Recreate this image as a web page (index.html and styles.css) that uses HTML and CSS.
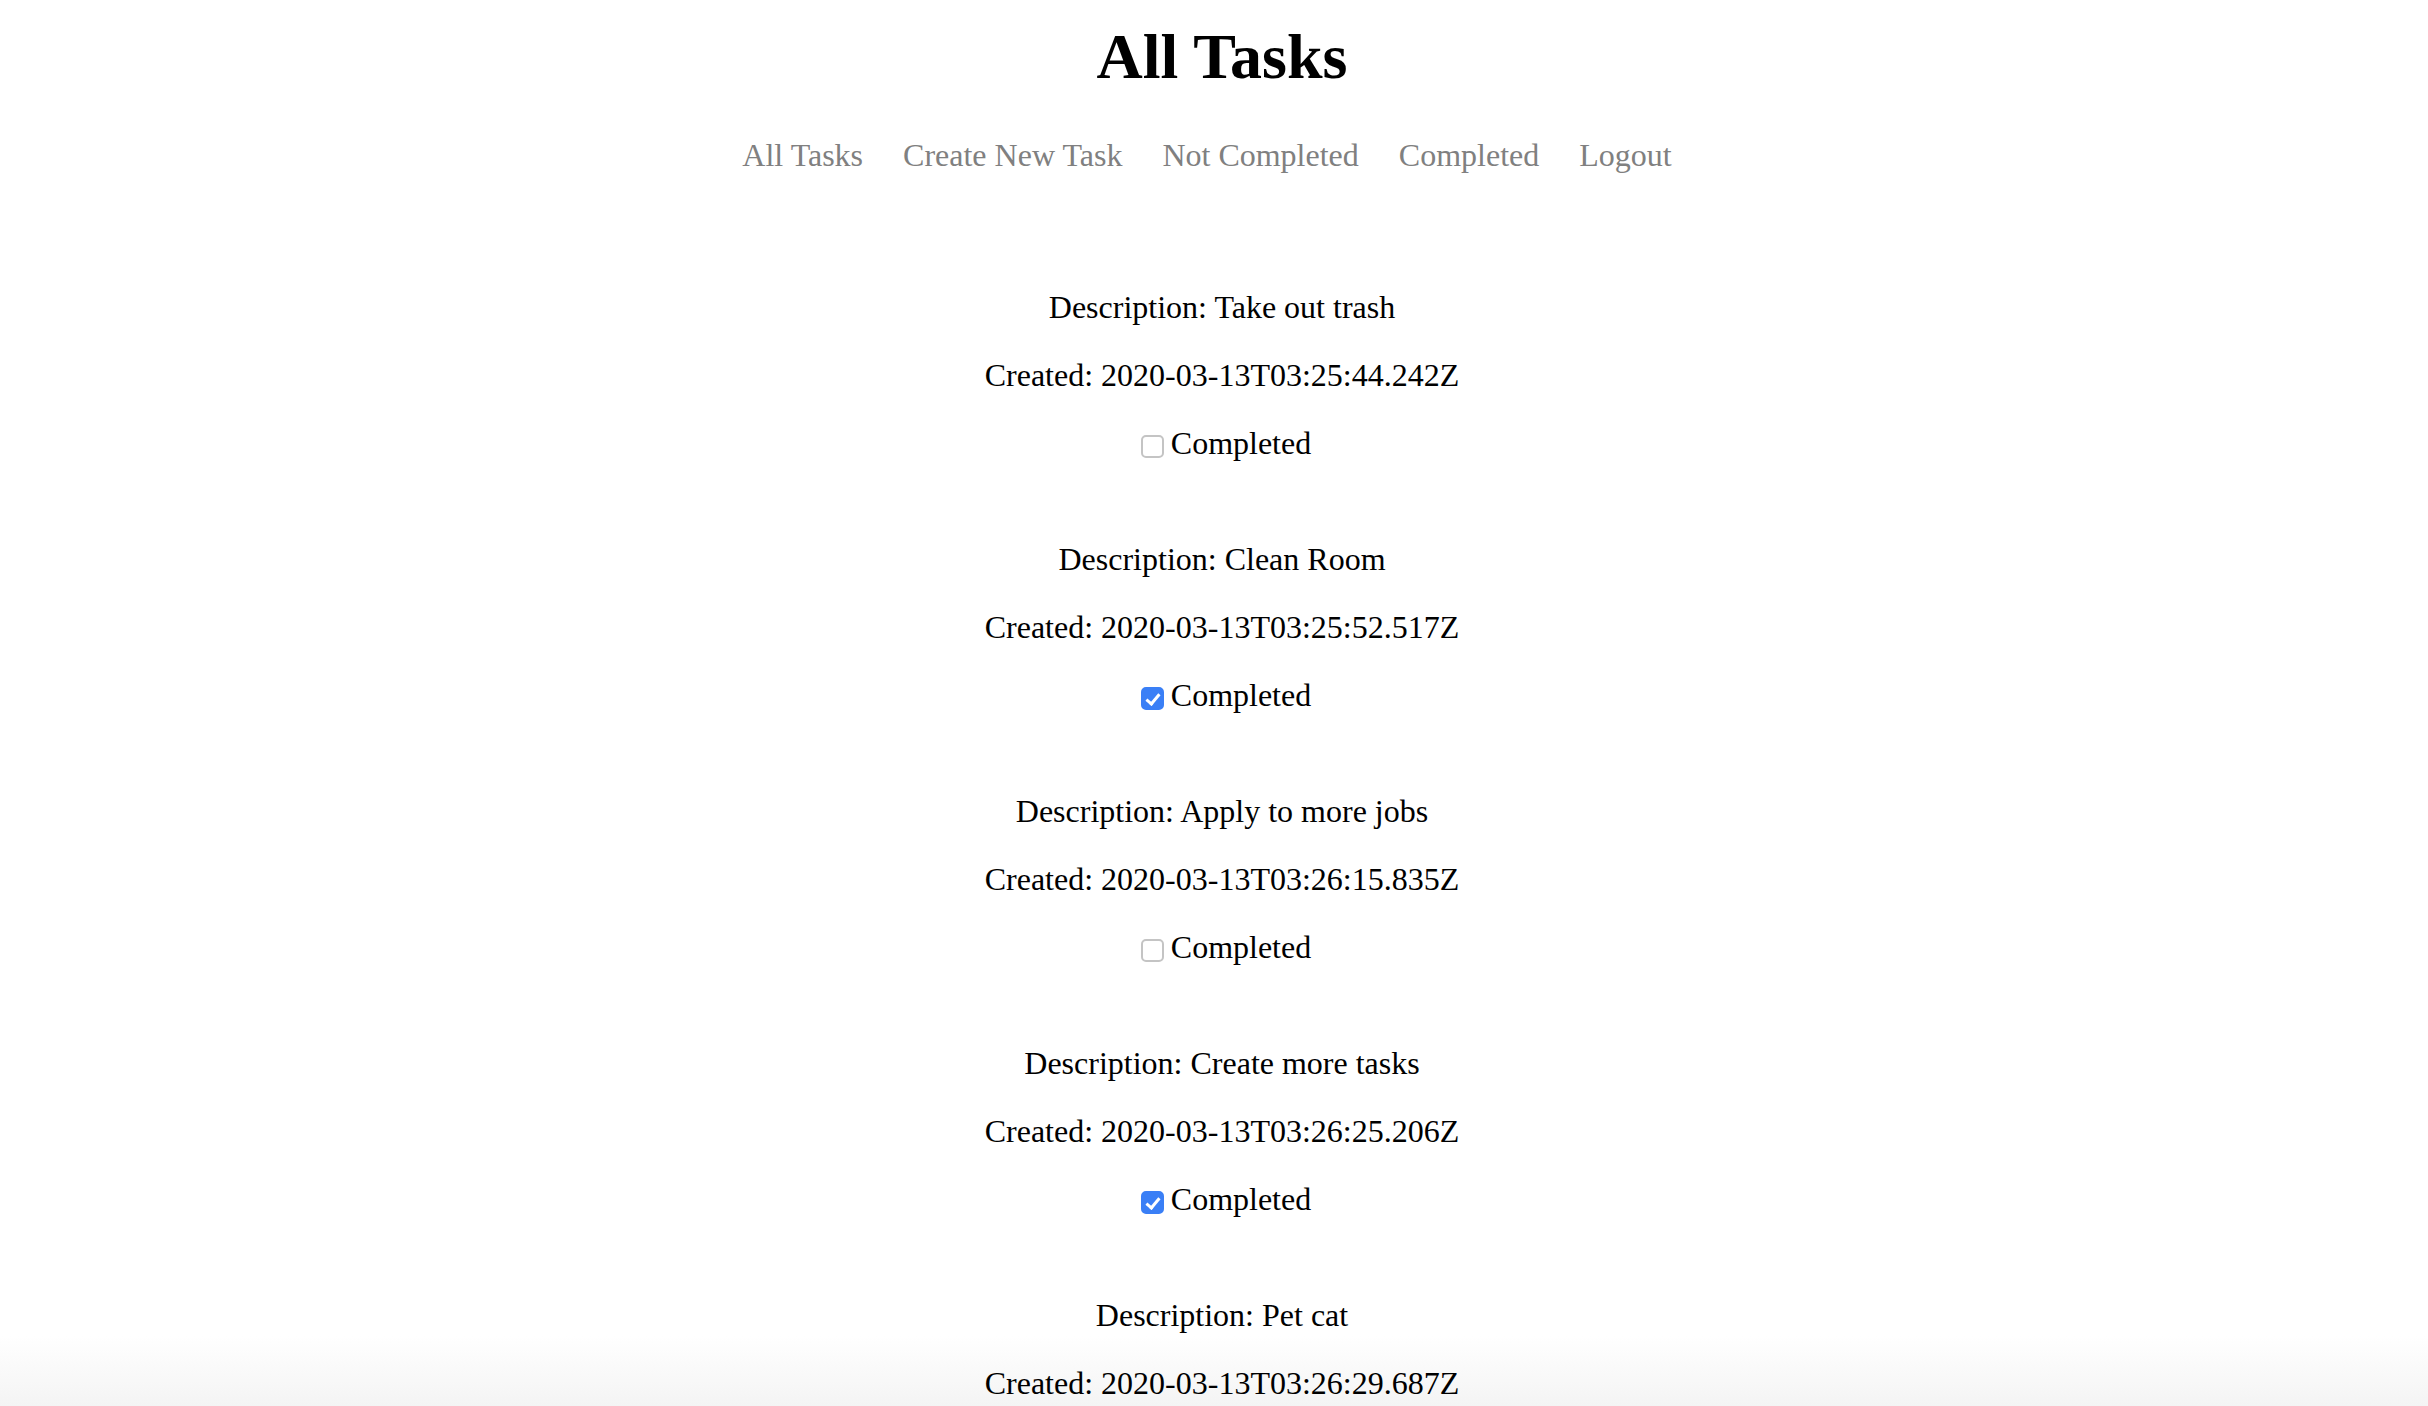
FILE: index.html
```html
<!DOCTYPE html>
<html lang="en">
<head>
<meta charset="utf-8">
<title>All Tasks</title>
<link rel="stylesheet" href="styles.css">
</head>
<body>
<div class="page">
  <h1 class="title">All Tasks</h1>
  <nav class="nav">
    <a class="nav-link" href="#">All Tasks</a>
    <a class="nav-link" href="#">Create New Task</a>
    <a class="nav-link" href="#">Not Completed</a>
    <a class="nav-link" href="#">Completed</a>
    <a class="nav-link" href="#">Logout</a>
  </nav>
  <main class="tasks">
    <div class="task">
      <p class="line">Description: Take out trash</p>
      <p class="line">Created: 2020-03-13T03:25:44.242Z</p>
      <p class="line"><label class="check"><input class="box" type="checkbox">Completed</label></p>
    </div>
    <div class="task">
      <p class="line">Description: Clean Room</p>
      <p class="line">Created: 2020-03-13T03:25:52.517Z</p>
      <p class="line"><label class="check"><input class="box" type="checkbox" checked>Completed</label></p>
    </div>
    <div class="task">
      <p class="line">Description: Apply to more jobs</p>
      <p class="line">Created: 2020-03-13T03:26:15.835Z</p>
      <p class="line"><label class="check"><input class="box" type="checkbox">Completed</label></p>
    </div>
    <div class="task">
      <p class="line">Description: Create more tasks</p>
      <p class="line">Created: 2020-03-13T03:26:25.206Z</p>
      <p class="line"><label class="check"><input class="box" type="checkbox" checked>Completed</label></p>
    </div>
    <div class="task">
      <p class="line">Description: Pet cat</p>
      <p class="line">Created: 2020-03-13T03:26:29.687Z</p>
    </div>
  </main>
</div>
</body>
</html>
```
FILE: styles.css
```css
html, body {
  margin: 0;
  padding: 0;
}
html {
  background: #ffffff;
}
body {
  font-family: "Liberation Serif", "Times New Roman", serif;
  font-size: 32px;
  line-height: 36px;
  color: #000;
  overflow: hidden;
  height: 1406px;
  background:
    linear-gradient(to bottom, rgba(245,245,245,0), rgba(244,244,244,1)) left bottom / 100% 70px no-repeat,
    #ffffff;
}
.page {
  padding-left: 16px;
  text-align: center;
}
.title {
  margin: 0;
  padding-top: 20px;
  font-size: 64px;
  line-height: 74px;
  font-weight: bold;
}
.nav {
  display: flex;
  justify-content: center;
  gap: 40px;
  margin-top: 43px;
  padding-right: 30px;
}
.nav-link {
  color: #808080;
  text-decoration: none;
}
.tasks {
  margin-top: 116px;
}
.task {
  margin-bottom: 80px;
}
.line {
  margin: 0 0 32px 0;
}
.task .line:last-child {
  margin-bottom: 0;
}
.check {
  cursor: pointer;
}
.box {
  -webkit-appearance: none;
  appearance: none;
  display: inline-block;
  position: relative;
  width: 23px;
  height: 23px;
  margin: 0 7px 0 8px;
  vertical-align: -4px;
  box-sizing: border-box;
  border: 2px solid #c4c4c4;
  border-radius: 5px;
  background: #fff;
}
.box:checked {
  background: #3a7ff6;
  border-color: #3a7ff6;
}
.box:checked::after {
  content: "";
  position: absolute;
  left: 6px;
  top: 2px;
  width: 5px;
  height: 11px;
  border: solid #fff;
  border-width: 0 3px 3px 0;
  transform: rotate(40deg);
}
```
